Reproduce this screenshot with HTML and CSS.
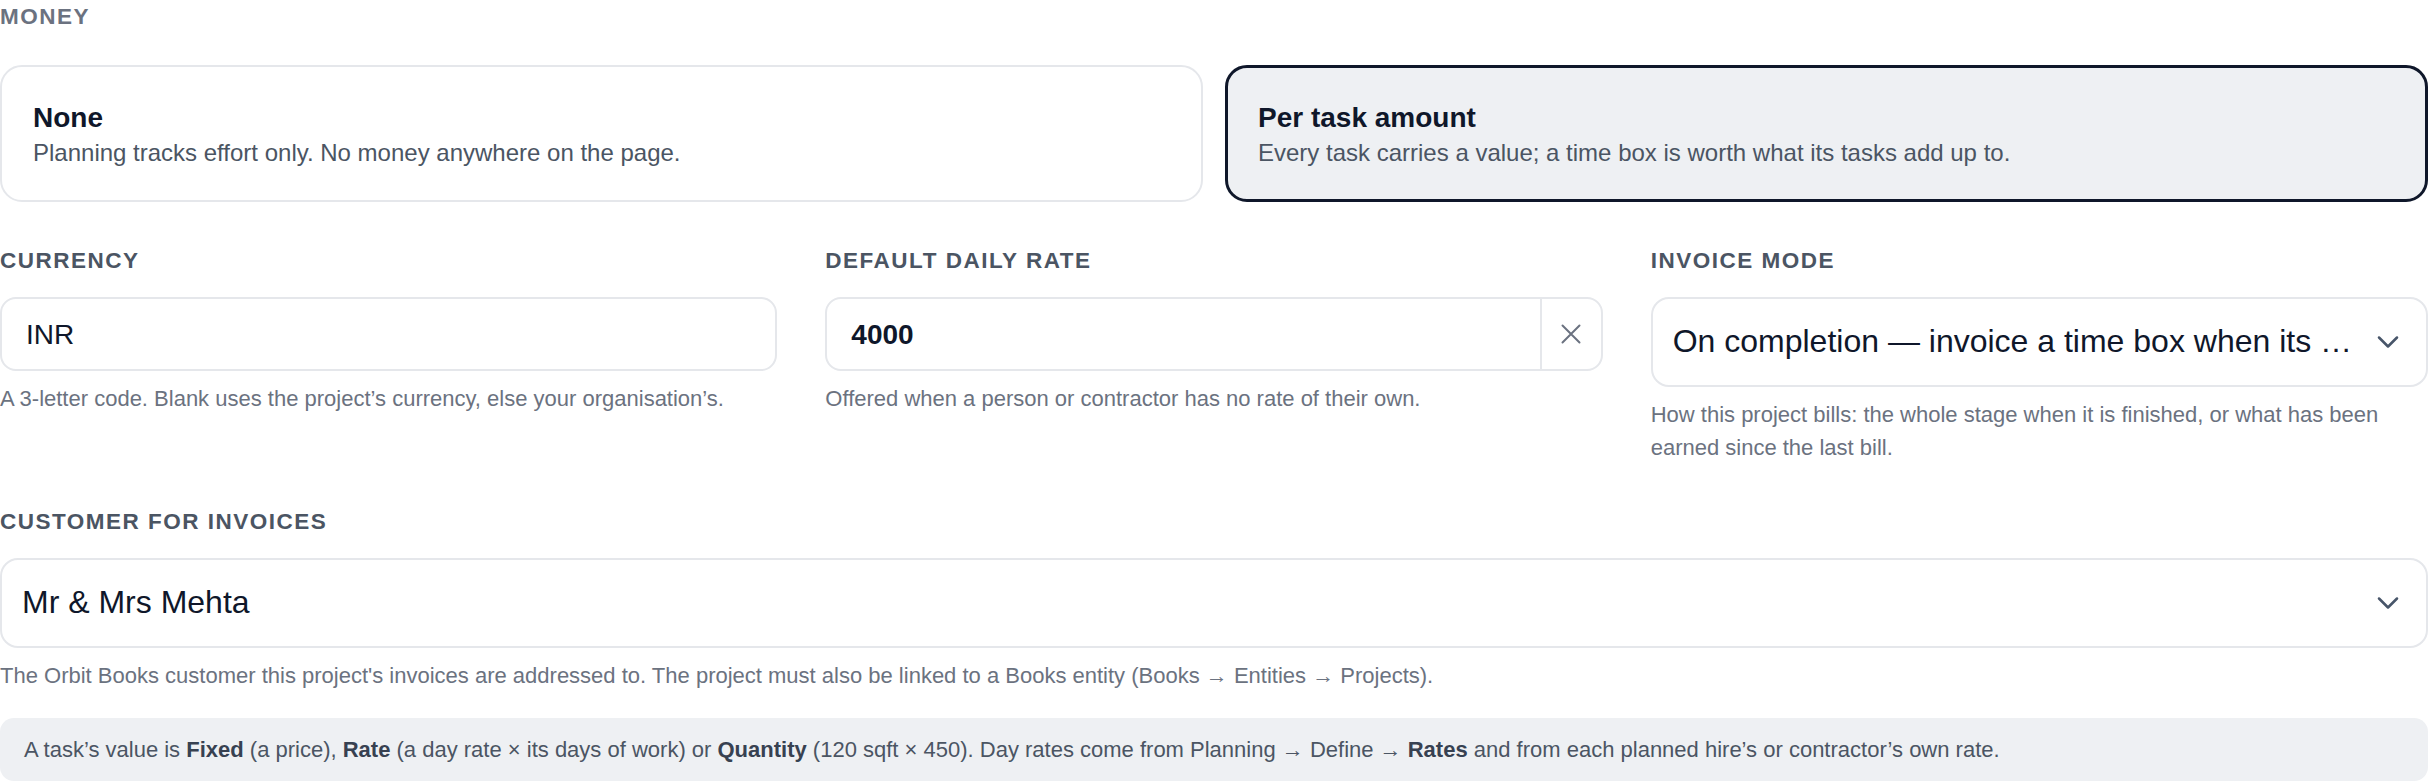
FILE: index.html
```html
<!DOCTYPE html>
<html lang="en">
<head>
<meta charset="utf-8">
<title>Money settings</title>
<link rel="stylesheet" href="styles.css">
</head>
<body>
<main class="page">
  <section class="money">
    <div class="label label-muted">Money</div>
    <div class="mode-cards">
      <div class="mode-card">
        <div class="mode-title">None</div>
        <div class="mode-desc">Planning tracks effort only. No money anywhere on the page.</div>
      </div>
      <div class="mode-card is-selected">
        <div class="mode-title">Per task amount</div>
        <div class="mode-desc">Every task carries a value; a time box is worth what its tasks add up to.</div>
      </div>
    </div>
  </section>

  <section class="fields">
    <div class="field">
      <div class="label">Currency</div>
      <div class="input"><span class="input-value">INR</span></div>
      <p class="help">A 3-letter code. Blank uses the project’s currency, else your organisation’s.</p>
    </div>
    <div class="field">
      <div class="label">Default daily rate</div>
      <div class="input has-clear">
        <span class="input-value strong">4000</span>
        <span class="clear-btn">
          <svg width="34" height="34" viewBox="0 0 24 24" fill="none" stroke="currentColor" stroke-width="1.4" stroke-linecap="round"><path d="M18 6 6 18M6 6l12 12"/></svg>
        </span>
      </div>
      <p class="help">Offered when a person or contractor has no rate of their own.</p>
    </div>
    <div class="field">
      <div class="label">Invoice mode</div>
      <div class="select">
        <span class="select-value">On completion — invoice a time box when its tasks are all done</span>
        <svg class="chevron" width="36" height="36" viewBox="0 0 24 24" fill="none" stroke="currentColor" stroke-width="1.7" stroke-linecap="round" stroke-linejoin="round"><path d="m6 9 6 6 6-6"/></svg>
      </div>
      <p class="help">How this project bills: the whole stage when it is finished, or what has been earned since the last bill.</p>
    </div>
  </section>

  <section class="customer">
    <div class="label">Customer for invoices</div>
    <div class="select">
      <span class="select-value">Mr &amp; Mrs Mehta</span>
      <svg class="chevron" width="36" height="36" viewBox="0 0 24 24" fill="none" stroke="currentColor" stroke-width="1.7" stroke-linecap="round" stroke-linejoin="round"><path d="m6 9 6 6 6-6"/></svg>
    </div>
    <p class="help">The Orbit Books customer this project's invoices are addressed to. The project must also be linked to a Books entity (Books → Entities → Projects).</p>
  </section>

  <div class="note">A task’s value is <b>Fixed</b> (a price), <b>Rate</b> (a day rate × its days of work) or <b>Quantity</b> (120 sqft × 450). Day rates come from Planning → Define → <b>Rates</b> and from each planned hire’s or contractor’s own rate.</div>
</main>
</body>
</html>
```

FILE: styles.css
```css
* {
  box-sizing: border-box;
}

body {
  margin: 0;
  background: #ffffff;
  font-family: "Liberation Sans", Arial, sans-serif;
  color: #0f172a;
}

.page {
  display: flex;
  flex-direction: column;
}

/* section labels */
.label {
  font-size: 22.5px;
  line-height: 34px;
  font-weight: 700;
  letter-spacing: 1.5px;
  text-transform: uppercase;
  color: #4b5563;
  margin-bottom: 19px;
}

.label-muted {
  color: #6b7280;
  margin-bottom: 31px;
}

/* money mode choice cards */
.mode-cards {
  display: grid;
  grid-template-columns: 1fr 1fr;
  gap: 22px;
}

.mode-card {
  border: 2px solid #e5e7eb;
  border-radius: 22px;
  padding: 33px 31px 31px;
  background: #ffffff;
}

.mode-card.is-selected {
  border: 3px solid #0f172a;
  background: #eef0f3;
  padding: 32px 30px 30px;
}

.mode-title {
  font-size: 28px;
  line-height: 36px;
  font-weight: 700;
  color: #0f172a;
}

.mode-desc {
  font-size: 24px;
  line-height: 33px;
  color: #4b5563;
}

/* three field columns */
.fields {
  display: grid;
  grid-template-columns: repeat(3, 1fr);
  gap: 48px;
  margin-top: 42px;
}

.field {
  min-width: 0;
}

.input {
  display: flex;
  align-items: stretch;
  height: 74px;
  border: 2px solid #e5e7eb;
  border-radius: 16px;
  background: #ffffff;
}

.input-value {
  flex: 1;
  display: flex;
  align-items: center;
  padding: 2px 24px 0;
  font-size: 28px;
  color: #0f172a;
}

.input-value.strong {
  font-weight: 700;
}

.clear-btn {
  width: 61px;
  display: flex;
  align-items: center;
  justify-content: center;
  border-left: 2px solid #e5e7eb;
  color: #6b7280;
}

.select {
  display: flex;
  align-items: center;
  height: 90px;
  border: 2px solid #e5e7eb;
  border-radius: 18px;
  background: #ffffff;
  padding: 0 20px 0 20px;
}

.select-value {
  flex: 1;
  min-width: 0;
  font-size: 32px;
  line-height: 38px;
  color: #0f172a;
  white-space: nowrap;
  overflow: hidden;
  text-overflow: ellipsis;
  padding-right: 15px;
  margin-top: -3px;
}

.chevron {
  flex: none;
  color: #475569;
}

.help {
  margin: 11px 0 0;
  font-size: 22px;
  line-height: 33px;
  color: #6b7280;
}

/* customer */
.customer {
  margin-top: 41px;
}

/* explanatory note */
.note {
  margin-top: 26px;
  background: #eef0f3;
  border-radius: 14px;
  padding: 15px 24px;
  font-size: 22px;
  line-height: 33px;
  color: #4b5563;
}

.note b {
  color: #374151;
}
```
